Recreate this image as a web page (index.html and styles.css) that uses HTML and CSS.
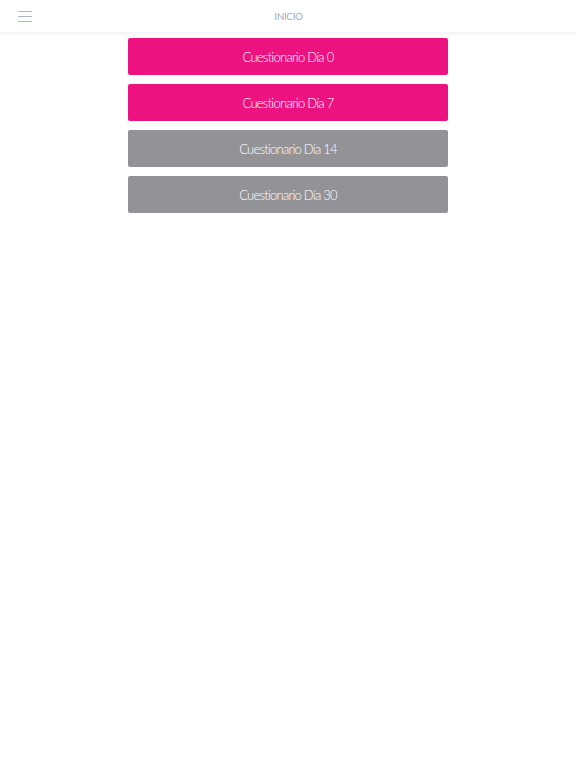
FILE: index.html
```html
<!DOCTYPE html>
<html lang="es">
<head>
<meta charset="utf-8">
<title>Inicio</title>
<link rel="stylesheet" href="styles.css">
</head>
<body>
<header class="topbar">
  <button class="menu" aria-label="Menú">
    <svg width="14" height="11" viewBox="0 0 14 11"><g stroke="#aeb4cb" stroke-width="1"><line x1="0" y1="0.5" x2="14" y2="0.5"/><line x1="0" y1="5.5" x2="14" y2="5.5"/><line x1="0" y1="10.5" x2="14" y2="10.5"/></g></svg>
  </button>
  <div class="title">INICIO</div>
</header>
<main class="list">
  <a class="btn active">Cuestionario Día 0</a>
  <a class="btn active">Cuestionario Día 7</a>
  <a class="btn disabled">Cuestionario Día 14</a>
  <a class="btn disabled">Cuestionario Día 30</a>
</main>
</body>
</html>
```
FILE: styles.css
```css
html, body { margin: 0; padding: 0; background: #fff; }
body { font-family: "Lato", "Liberation Sans", sans-serif; }
.topbar {
  position: relative;
  height: 32px;
  background: #fff;
  box-shadow: 0 1px 6px rgba(0,0,0,0.08);
  display: flex;
  align-items: center;
  justify-content: center;
}
.menu {
  position: absolute;
  left: 18px;
  top: 11px;
  padding: 0; border: 0; background: none;
  display: block; line-height: 0;
}
.title {
  font-size: 10px;
  color: #a9aec2;
  letter-spacing: -0.4px;
  padding-left: 1px;
}
.list {
  width: 320px;
  margin: 6px auto 0;
  display: flex;
  flex-direction: column;
  gap: 9px;
}
.btn {
  display: flex;
  align-items: center;
  justify-content: center;
  height: 37px;
  border-radius: 2px;
  color: #fff;
  font-size: 13px;
  font-weight: 300;
  letter-spacing: -0.75px;
}
.active { background: #ec1380; }
.disabled { background: #939296; }
```
